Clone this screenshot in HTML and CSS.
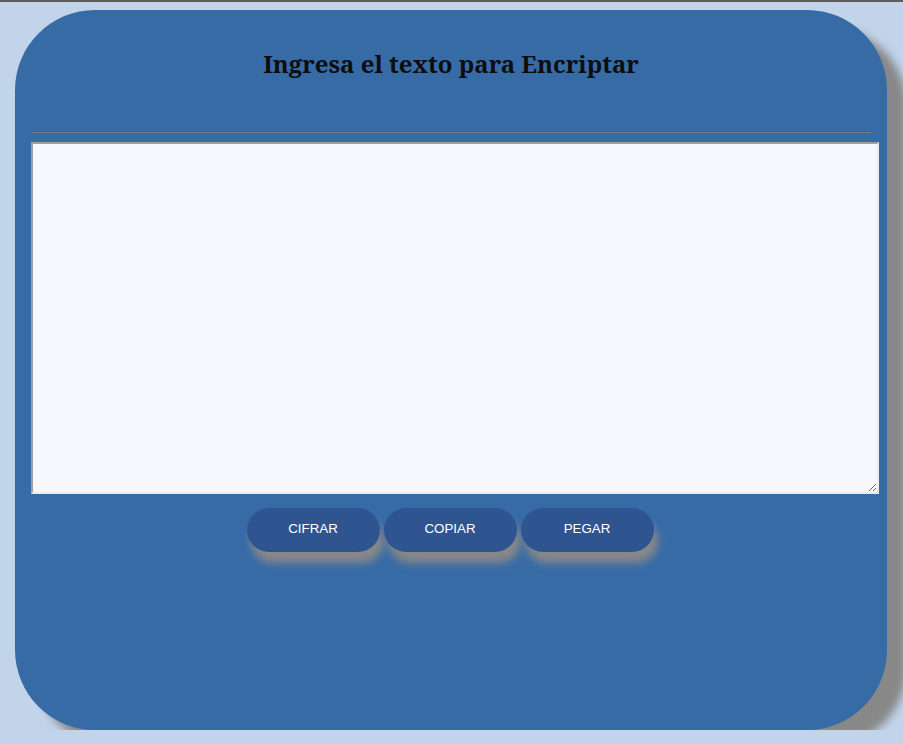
FILE: index.html
```html
<!DOCTYPE html>
<html lang="es">
<head>
<meta charset="utf-8">
<title>Encriptador</title>
<link rel="stylesheet" href="styles.css">
</head>
<body>
<main class="card">
  <h2 class="title">Ingresa el texto para Encriptar</h2>
  <hr class="divider">
  <textarea class="input"></textarea>
  <div class="actions">
    <button class="btn">CIFRAR</button>
    <button class="btn">COPIAR</button>
    <button class="btn">PEGAR</button>
  </div>
</main>
</body>
</html>
```

FILE: styles.css
```css
html {
  background: #c1d4ea;
  border-top: 2px solid #5e5e5e;
  height: 100%;
  box-sizing: border-box;
  overflow: hidden;
}
body {
  margin: 0;
  padding: 8px 0 0 15px;
}
.card {
  width: 872px;
  height: 720px;
  box-sizing: border-box;
  padding: 0 16px;
  background: #376ba6;
  border-radius: 80px;
  box-shadow: 20px 17px 8px #888888;
  display: flex;
  flex-direction: column;
  align-items: flex-start;
}
.title {
  align-self: stretch;
  margin: 40px 0 0;
  text-align: center;
  font-family: "Noto Serif", "Liberation Serif", serif;
  font-weight: bold;
  font-size: 24px;
  line-height: 28px;
  color: #0d0d0d;
}
.divider {
  align-self: stretch;
  margin: 53px 0 0 1px;
  border: 0;
  border-top: 1px solid #5b5b5b;
  border-bottom: 1px solid #6f7d8f;
  height: 0;
}
.input {
  margin: 9px 0 0 0;
  width: 848px;
  height: 352px;
  box-sizing: border-box;
  border: 2px solid;
  border-color: #a0a0a0 #ececec #ececec #a0a0a0;
  background: #f7f8fd;
  padding: 2px;
  font-family: "Liberation Mono", monospace;
  font-size: 13px;
}
.actions {
  align-self: stretch;
  margin-top: 14px;
  padding-right: 2px;
  display: flex;
  justify-content: center;
  gap: 4px;
}
.btn {
  width: 133px;
  height: 44px;
  border: 0;
  border-radius: 22px;
  background: #2f5591;
  color: #ffffff;
  font-family: "Liberation Sans", Arial, sans-serif;
  font-size: 13.33px;
  box-shadow: 4px 11px 8px #888888;
  padding: 0 0 4px;
}
```
